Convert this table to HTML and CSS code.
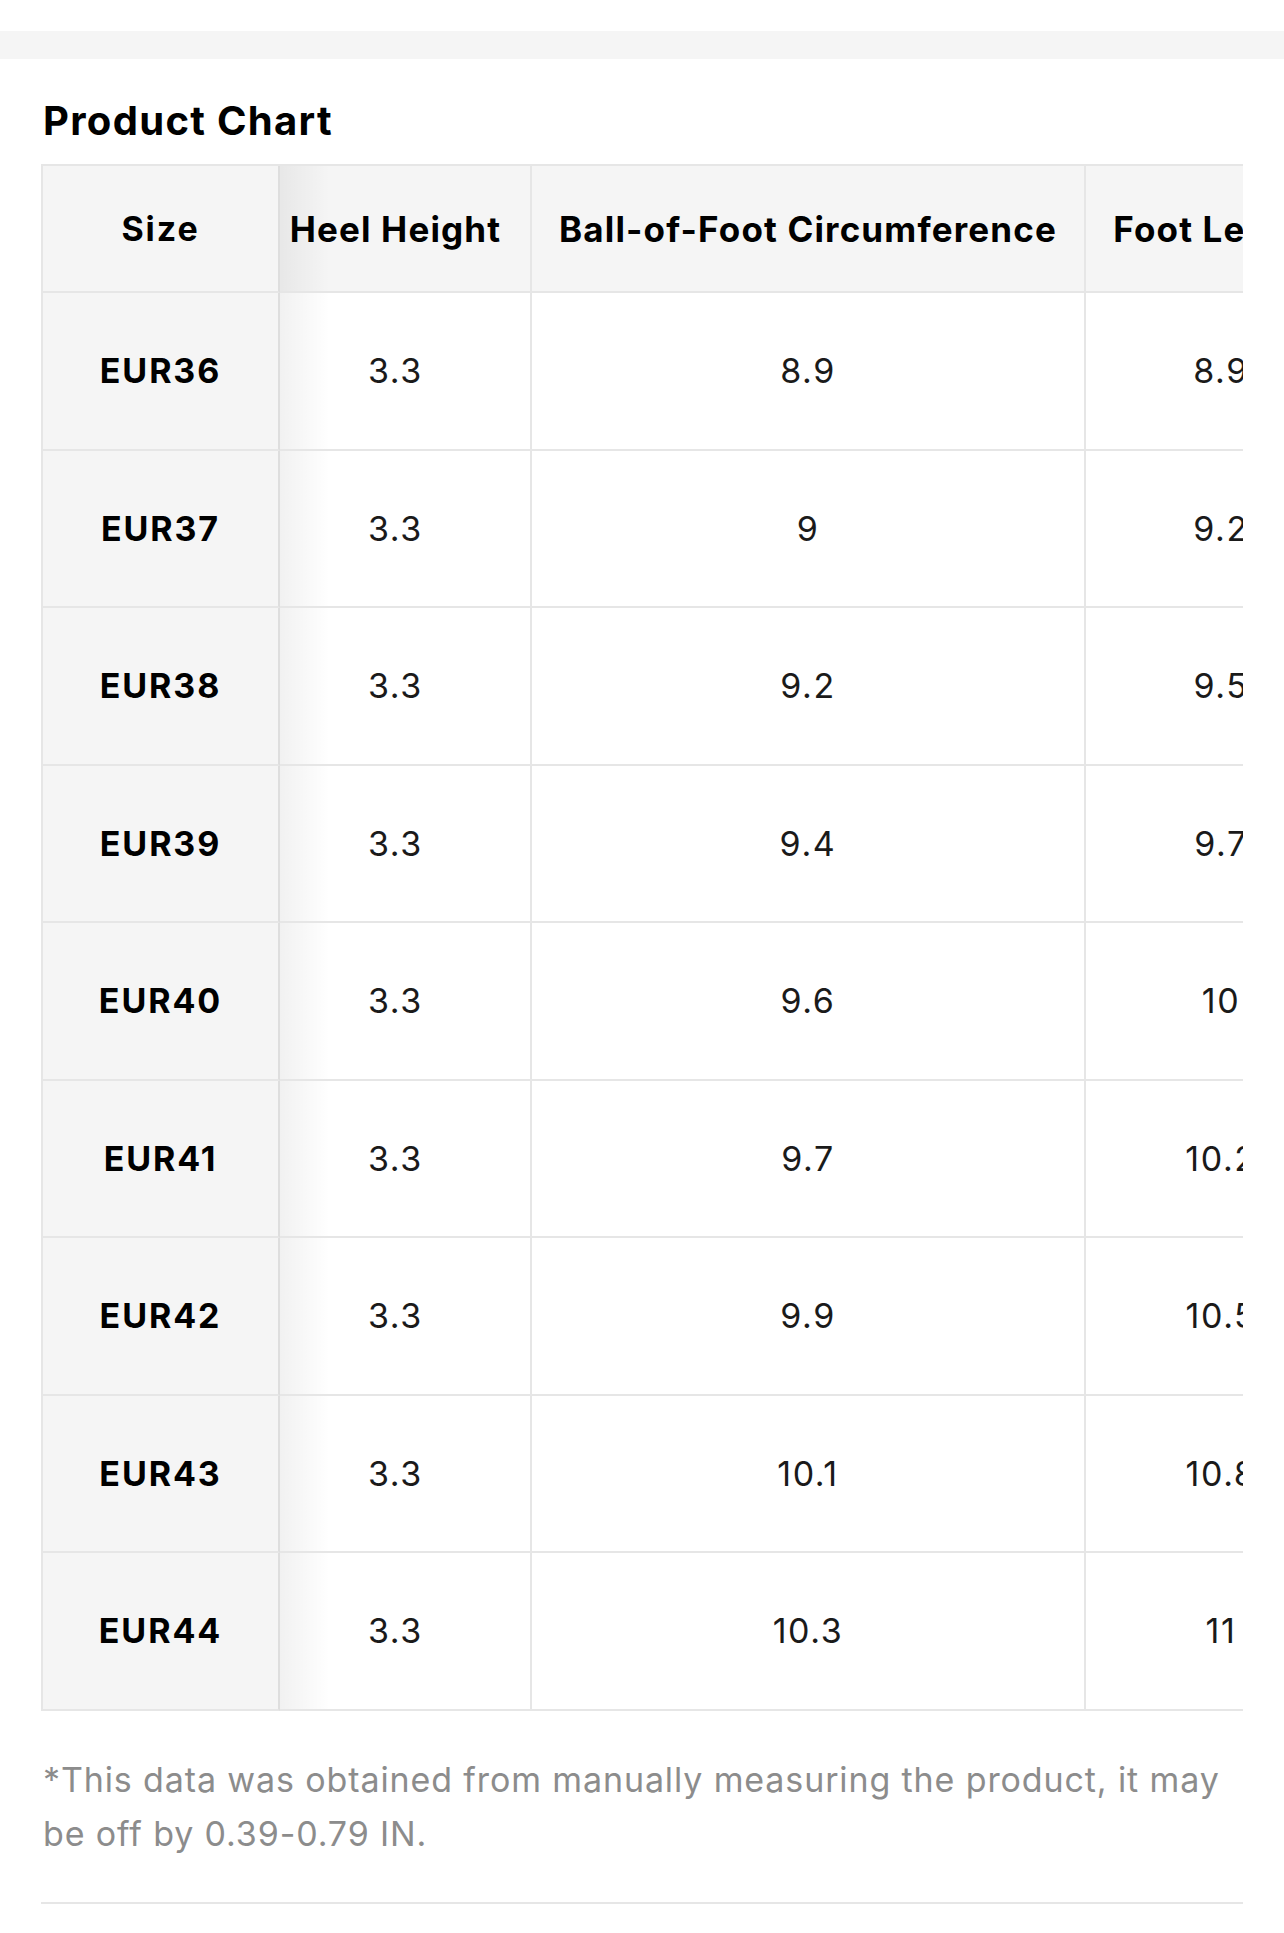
FILE: index.html
```html
<!DOCTYPE html>
<html lang="en">
<head>
<meta charset="utf-8">
<title>Product Chart</title>
<link rel="stylesheet" href="styles.css">
</head>
<body>
<div class="band"></div>
<section class="section">
  <h2 class="title">Product Chart</h2>
  <div class="chart-wrap">
    <div class="chart">
      <div class="cell head first">Size</div>
      <div class="cell head second">Heel Height</div>
      <div class="cell head">Ball-of-Foot Circumference</div>
      <div class="cell head">Foot Length</div>

      <div class="cell first">EUR36</div><div class="cell second">3.3</div><div class="cell">8.9</div><div class="cell">8.9</div>
      <div class="cell first">EUR37</div><div class="cell second">3.3</div><div class="cell">9</div><div class="cell">9.2</div>
      <div class="cell first">EUR38</div><div class="cell second">3.3</div><div class="cell">9.2</div><div class="cell">9.5</div>
      <div class="cell first">EUR39</div><div class="cell second">3.3</div><div class="cell">9.4</div><div class="cell">9.7</div>
      <div class="cell first">EUR40</div><div class="cell second">3.3</div><div class="cell">9.6</div><div class="cell">10</div>
      <div class="cell first">EUR41</div><div class="cell second">3.3</div><div class="cell">9.7</div><div class="cell">10.2</div>
      <div class="cell first">EUR42</div><div class="cell second">3.3</div><div class="cell">9.9</div><div class="cell">10.5</div>
      <div class="cell first">EUR43</div><div class="cell second">3.3</div><div class="cell">10.1</div><div class="cell">10.8</div>
      <div class="cell first">EUR44</div><div class="cell second">3.3</div><div class="cell">10.3</div><div class="cell">11</div>
    </div>
  </div>
  <p class="note">*This data was obtained from manually measuring the product, it may be off by 0.39-0.79 IN.</p>
  <div class="rule"></div>
</section>
</body>
</html>
```
FILE: styles.css
```css
html, body {
  margin: 0;
  padding: 0;
  background: #ffffff;
}
body {
  font-family: Inter, "Noto Sans", "Liberation Sans", sans-serif;
  color: #111111;
}
.band {
  margin-top: 31px;
  height: 28px;
  background: #f5f5f5;
}
.section {
  padding: 0 41px;
}
.title {
  margin: 38px 0 0 2px;
  font-size: 40px;
  line-height: 48px;
  font-weight: 700;
  color: #000000;
  letter-spacing: 1.3px;
}
.chart-wrap {
  margin-top: 19px;
  overflow: hidden;
  border-top: 2px solid #e6e6e6;
  border-left: 2px solid #e6e6e6;
}
.chart {
  display: grid;
  width: max-content;
  grid-template-columns: 237px 252px 554px 272px;
  grid-template-rows: 127px repeat(9, 157.5px);
}
.cell {
  box-sizing: border-box;
  display: flex;
  align-items: center;
  justify-content: center;
  border-right: 2px solid #e6e6e6;
  border-bottom: 2px solid #e6e6e6;
  font-size: 34px;
  font-weight: 400;
  color: #1a1a1a;
  background: #ffffff;
  white-space: nowrap;
  letter-spacing: 1.6px;
}
.cell.head {
  font-size: 35px;
  font-weight: 700;
  color: #000000;
  background: #f5f5f5;
  letter-spacing: 1.15px;
}
.cell.first {
  font-size: 34px;
  font-weight: 700;
  color: #000000;
  background: #f5f5f5;
  border-right-color: #dedede;
  letter-spacing: 1.9px;
}
.cell.second {
  padding-right: 19px;
  background-image: linear-gradient(to right, rgba(0, 0, 0, 0.055), rgba(0, 0, 0, 0) 50px);
}
.note {
  margin: 42px 0 0 2px;
  font-size: 34px;
  line-height: 54px;
  color: #8c8c8c;
  letter-spacing: 0.88px;
}
.rule {
  margin-top: 41px;
  height: 2px;
  background: #e6e6e6;
}
```
